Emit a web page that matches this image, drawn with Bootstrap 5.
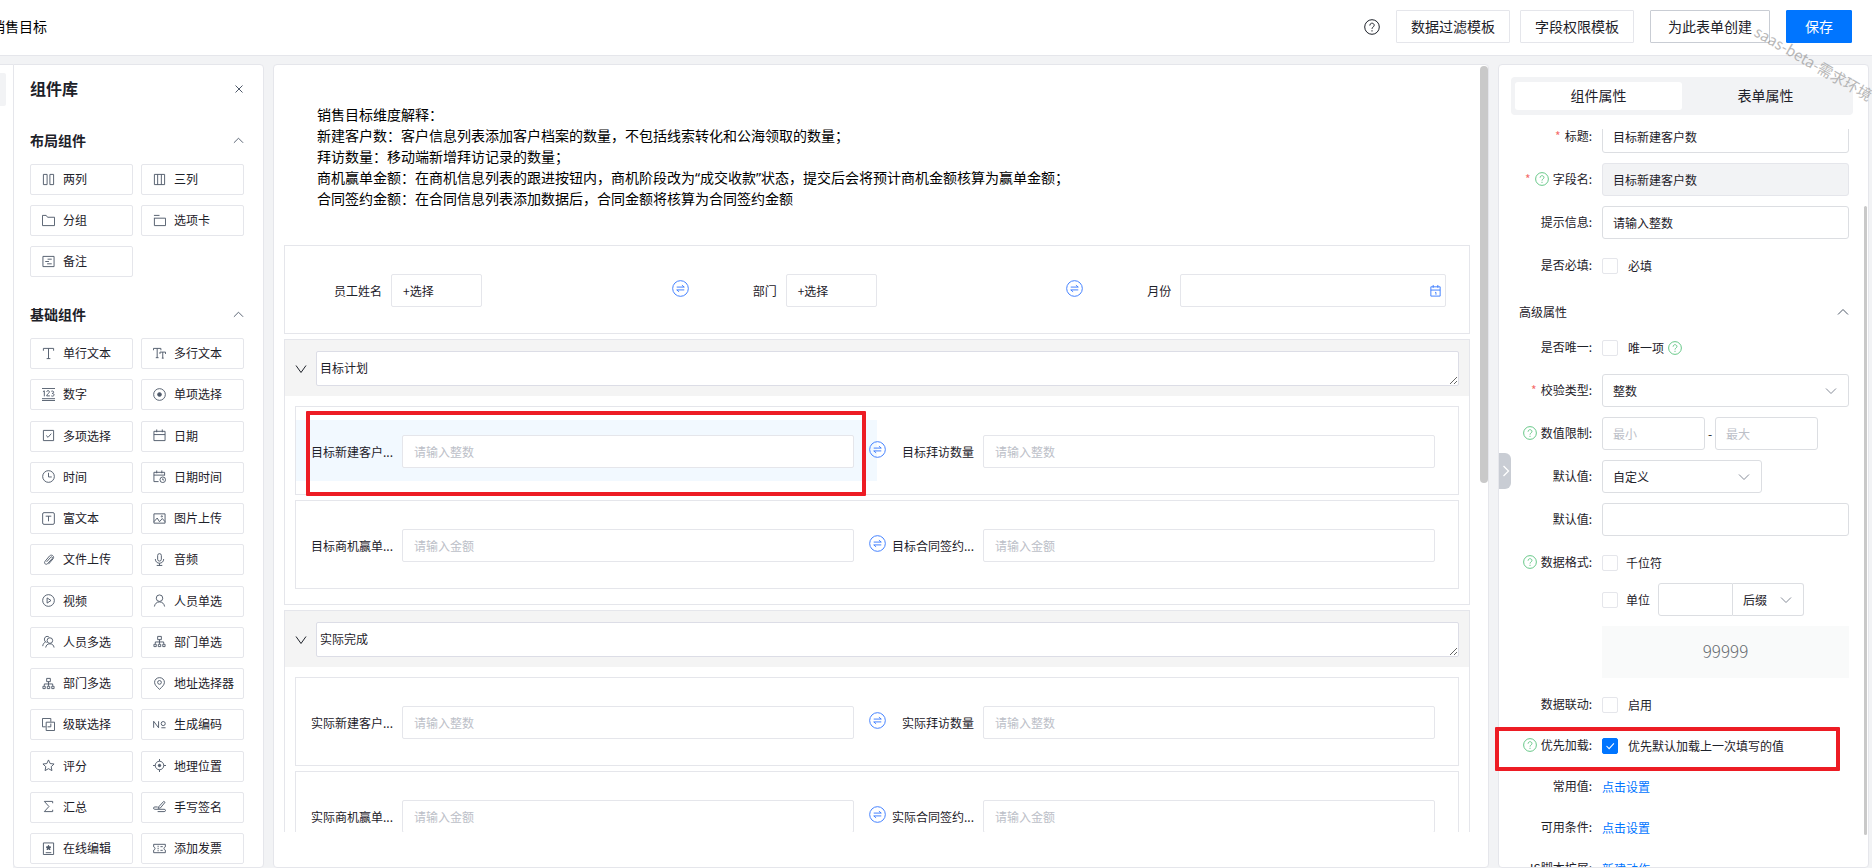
<!DOCTYPE html>
<html lang="zh-CN">
<head>
<meta charset="utf-8">
<meta name="viewport" content="width=device-width, initial-scale=1">
<title>销售目标</title>
<link rel="stylesheet" href="https://cdn.jsdelivr.net/npm/bootstrap@5.3.0/dist/css/bootstrap.min.css">
<style>
  :root { --line: #e5e6eb; --field-line: #dcdee2; --ink: #1d2129; --page: #f2f3f5; --brand: #0075ff; --alert: #ed1c24; }
  body { font: 12px/20px "Noto Sans CJK SC", "Liberation Sans", sans-serif; color: var(--ink); background: var(--page); }
  svg { display: block; fill: none; stroke: currentColor; }
  a { color: var(--brand); text-decoration: none; }

  .topbar { height: 56px; border-bottom: 1px solid var(--line); padding-right: 20px; padding-bottom: 2px; }
  .page-title { margin-left: -9px; font-size: 14px; font-weight: 400; color: #000; }
  .top-btn { height: 33px; padding: 0 14px; border: 1px solid var(--line); border-radius: 1px; font-size: 14px; line-height: 31px; color: var(--ink); background: #fff; }
  .top-btn.next { margin-left: 10px; }
  .top-btn.strong { border-color: #c9cdd4; padding: 0 17px; }
  .top-btn.save { background: var(--brand); border-color: var(--brand); color: #fff; padding: 0 18px; }
  .watermark { position: absolute; top: 20px; left: calc(100% - 116px); font-size: 15px; color: #8a8a8a; opacity: .6; white-space: nowrap; transform: rotate(30deg); transform-origin: 0 50%; z-index: 5; pointer-events: none; }

  .panel { background: #fff; border: 1px solid var(--line); border-radius: 4px; min-height: 0; }
  .main-area { min-height: 0; }
  .rail { width: 13px; background: #fff; border-top: 1px solid var(--line); padding-top: 8px; }
  .rail-item { display: block; width: 6px; height: 33px; background: var(--page); border-radius: 0 2px 2px 0; }

  .library { width: 251px; border-top-left-radius: 0; padding: 10px 19px 0 16px; overflow: hidden; }
  .library h1 { font-size: 16px; font-weight: 700; line-height: 27px; }
  .library h2 { font-size: 14px; font-weight: 700; line-height: 22px; }
  .block-head { padding: 3px 0 13px; }
  .tool-grid { display: grid; grid-template-columns: 1fr 1fr; column-gap: 8px; row-gap: 10px; align-content: space-between; margin-bottom: 23px; }
  .tool-grid.tall { min-height: 526px; margin-bottom: 0; }
  .tool { height: 31px; display: flex; align-items: center; gap: 8px; padding: 0 0 1px 11px; border: 1px solid var(--line); border-radius: 2px; background: #fff; color: var(--ink); white-space: nowrap; line-height: 20px; }
  .tool svg { width: 13px; height: 13px; color: #4e5969; flex: none; }
  .plain { border: 0; background: none; padding: 0; color: #4e5969; }
  .plain.dark { color: #1d2129; }

  .canvas { margin: 0 9px; padding: 1px 0 35px; overflow: hidden; }
  .canvas-view { overflow: hidden; padding: 38px 10px 0; }
  .intro { margin: 0 0 36px 33px; line-height: 21px; font-family: "Noto Sans", "Noto Sans CJK SC", sans-serif; font-size: 14px; color: #000; }
  .bar { width: 8px; background: #c9c9c9; border-radius: 4px; }
  .canvas .bar { height: 417px; margin-bottom: -35px; }
  .form-line { border: 1px solid var(--line); display: flex; padding: 13px 0; margin-bottom: 5px; background: #fff; }
  .cell { flex: 1 1 0; min-width: 0; display: flex; align-items: center; position: relative; height: 61px; padding: 2px 23px 0 14px; }
  .cell.active { background: #f2f9ff; }
  .cell > label, .cell > .cap { width: 83px; margin-right: 9px; text-align: right; white-space: nowrap; flex: none; }
  .swap { position: absolute; right: -9px; top: 21px; width: 17px; height: 17px; z-index: 2; border: 0; padding: 0; background: none; color: #3a7bff; }
  .ctl { height: 33px; border: 1px solid var(--line); border-radius: 2px; padding: 0 11px; background-color: #fff; color: var(--ink); font-size: 12px; line-height: 20px; width: 100%; min-width: 0; }
  .ctl::placeholder { color: #bcc0c8; opacity: 1; }
  button.ctl { width: 91px; text-align: left; }
  .date-icon { color: #3a7bff; }
  .group { border: 1px solid var(--line); margin-bottom: 5px; padding-bottom: 10px; }
  .group-head { background: #f4f4f4; padding: 11px 10px 10px 9px; display: flex; align-items: center; gap: 8px; margin-bottom: 10px; height: 56px; }
  .group-head textarea { flex: 1; height: 35px; border: 1px solid #dcdde6; border-radius: 2px; padding: 7px 3px; line-height: 18px; color: var(--ink); overflow: hidden; resize: both; min-width: 0; }
  .group .form-line { margin: 0 10px 5px; }
  .mark-red { position: absolute; border: 4px solid var(--alert); border-radius: 1px; pointer-events: none; z-index: 3; }
  .mark-field { left: 10px; right: 11px; top: -9px; height: 85px; }
  .mark-row { left: -16px; right: 9px; top: -2px; height: 44px; }

  .props { width: 371px; margin-right: 3px; position: relative; }
  .tabs { margin: 12px 15px 14px 12px; height: 38px; padding: 5px 4px; background: var(--page); border-radius: 4px; display: flex; }
  .tabs button { flex: 1; border: 0; border-radius: 3px; background: none; font-size: 14px; line-height: 26px; padding: 0 0 2px; color: var(--ink); }
  .tabs button.on { background: #fff; }
  .props-view { min-height: 0; overflow-x: visible; overflow-y: clip; padding-left: 12px; padding-right: 1px; }
  .props-form { margin: -9px 15px 0 0; }
  .prop { display: flex; align-items: center; min-height: 33px; margin-bottom: 10px; position: relative; }
  .prop.tight { margin-bottom: 8px; }
  .prop > .cap { width: 81px; margin-right: 10px; display: flex; align-items: center; justify-content: flex-end; gap: 4px; flex: none; white-space: nowrap; padding-bottom: 2px; }
  .need { color: #f56c6c; line-height: 16px; }
  .q { width: 14px; height: 14px; color: #52c078; }
  .prop .ctl { border-color: var(--field-line); border-radius: 3px; padding: 0 10px; }
  .prop .ctl:disabled { background: var(--page); border-color: var(--line); }
  .range { width: 216px; }
  .range .dash { flex: 0 0 10px; text-align: center; }
  .w-mode { flex: 0 0 160px; }
  .w-unit { flex: 0 0 75px; }
  .w-place { flex: 0 0 71px; }
  select.ctl { appearance: none; background: #fff url("data:image/svg+xml,%3Csvg xmlns='http://www.w3.org/2000/svg' viewBox='0 0 12 12' fill='none' stroke='%23868c98'%3E%3Cpath d='M1 3.5l5 5 5-5'/%3E%3C/svg%3E") no-repeat right 11px center / 12px 12px; }
  .form-check-input { width: 16px; height: 16px; margin: 0 10px 0 0; border: 1px solid var(--line); flex: none; }
  .form-check-input[type=checkbox] { border-radius: 2px; }
  .form-check-input:checked { background-color: var(--brand); border-color: var(--brand); background-image: url("data:image/svg+xml,%3Csvg xmlns='http://www.w3.org/2000/svg' viewBox='0 0 16 16' fill='none' stroke='white' stroke-width='1.2'%3E%3Cpath d='M4 8l3 3 5.500-6'/%3E%3C/svg%3E"); }
  .sub-head { height: 30px; margin: 0 0 9px 8px; padding-top: 10px; }
  .sub-head h3 { font-size: 12px; font-weight: 400; line-height: 24px; margin: 0; }
  .sample { margin-left: 91px; height: 52px; background: #f9fafa; font-size: 17px; font-weight: 300; line-height: 50px; text-align: center; color: #666a70; margin-bottom: 10px; }
  .props .bar { width: 3px; height: 629px; margin-top: 77px; flex: none; }
  .drawer-grip { position: absolute; left: 0; top: 388px; width: 12px; height: 36px; border: 0; padding: 0; background: #c9cdd4; color: #fff; border-radius: 0 6px 6px 0; }
</style>
</head>
<body class="vh-100 d-flex flex-column overflow-hidden position-relative">

<svg width="0" height="0" class="position-absolute" aria-hidden="true">
  <symbol id="i-two" viewBox="0 0 14 14"><path d="M1.500 1.500h4v11h-4zM8.500 1.500h4v11h-4z"/></symbol>
  <symbol id="i-three" viewBox="0 0 14 14"><path d="M1.500 1.500h11v11h-11zM5 1.500v11M9 1.500v11"/></symbol>
  <symbol id="i-folder" viewBox="0 0 14 14"><path d="M.5 12.500v-11h4l1.500 2h7.500v9z"/></symbol>
  <symbol id="i-tab" viewBox="0 0 14 14"><path d="M1 1.500h6M1 4.500h12.500v8H1.500v-8"/></symbol>
  <symbol id="i-note" viewBox="0 0 14 14"><path d="M1 1.500h12v11H1zM6 4.500h4.500M3.500 7h4M5.500 9.500h5"/></symbol>
  <symbol id="i-text" viewBox="0 0 14 14"><path d="M1.500 4V1.500h11V4M7 1.500v11M5 12.500h4"/></symbol>
  <symbol id="i-multi" viewBox="0 0 14 14"><path d="M.5 3.500v-2h8v2M4.500 1.500v10M3 11.500h3M7.500 7.500v-2h6v2M10.500 5.500v6.500M9.500 12h2"/></symbol>
  <symbol id="i-num" viewBox="0 0 14 14"><path d="M0 .5h14M0 11.500h14M0 13.500h14M1 4l1.500-1v6M5 4c0-1.500 3-1.500 3 0 0 1.500-3 3-3 4.500h3.500M10 3.500c3-1 3.500 2 1 2.300 3.500.5 2 4-1 2.700"/></symbol>
  <symbol id="i-radio" viewBox="0 0 14 14"><circle cx="7" cy="7" r="6.300"/><circle cx="7" cy="7" r="2" fill="currentColor"/></symbol>
  <symbol id="i-check" viewBox="0 0 14 14"><path d="M1.500 1.500h11v11h-11zM4.500 7l2 2 3.500-4"/></symbol>
  <symbol id="i-cal" viewBox="0 0 14 14"><path d="M1 2.500h12v10H1zM1 6h12M4 .5v3M10 .5v3"/></symbol>
  <symbol id="i-clock" viewBox="0 0 14 14"><circle cx="7" cy="7" r="6.300"/><path d="M7 3v4.500h3.500"/></symbol>
  <symbol id="i-caltime" viewBox="0 0 14 14"><path d="M6 12.500H1v-10h11.500V6M1 5.500h11.500M4 .5v3M9.500 .5v3"/><circle cx="10.500" cy="10.500" r="3"/><path d="M10.500 9v1.700h1.300"/></symbol>
  <symbol id="i-rich" viewBox="0 0 14 14"><rect x=".7" y=".7" width="12.600" height="12.600" rx="1.500"/><path d="M4 4.500h6M7 4.500V10"/></symbol>
  <symbol id="i-image" viewBox="0 0 14 14"><path d="M1 2h12v10H1zM1 10.500l3.500-4 2.500 4L10 7l3 3.500"/><circle cx="9.500" cy="4.700" r=".7"/></symbol>
  <symbol id="i-clip" viewBox="0 0 14 14"><path d="M5 9.500l4.500-5c1-1 2.500.3 1.600 1.400L6 11.500c-1.600 1.700-4.300-.3-2.800-2.400L8 3.300c2.300-2.500 6 .3 3.900 3L7 12"/></symbol>
  <symbol id="i-mic" viewBox="0 0 14 14"><rect x="5" y=".7" width="4" height="8" rx="2"/><path d="M2.500 6.500c0 6 9 6 9 0M7 11v2.500M4 13.400h6"/></symbol>
  <symbol id="i-play" viewBox="0 0 14 14"><circle cx="7" cy="7" r="6.300"/><path d="M5.500 4.200v5.600L9.700 7z"/></symbol>
  <symbol id="i-user" viewBox="0 0 14 14"><circle cx="7" cy="4.500" r="3.500"/><path d="M1.500 13.500c.5-3 2.500-5 5.500-5s5 2 5.500 5"/></symbol>
  <symbol id="i-users" viewBox="0 0 14 14"><circle cx="8.500" cy="6" r="3"/><path d="M4 13.500c.3-2.500 2-4 4.500-4s4.200 1.500 4.500 4M5 8C1.500 7 2 1.500 5.500 1.500c1 0 1.700.4 2.300 1M.8 12c.2-2 1-3.500 3-4.500"/></symbol>
  <symbol id="i-dept" viewBox="0 0 14 14"><path d="M5 1.500h4v3.500H5zM7 5v2.500M2.500 9.500v-2h9v2M7 7.500v2M1 10h2.500v2.500H1zM5.700 10h2.600v2.500H5.700zM10.500 10H13v2.500h-2.500z"/></symbol>
  <symbol id="i-pin" viewBox="0 0 14 14"><path d="M7 13.300C4 10.500 1.700 8.500 1.700 5.700a5.300 5 0 0 1 10.600 0C12.300 8.500 10 10.500 7 13.300z"/><circle cx="7" cy="5.800" r="2"/></symbol>
  <symbol id="i-cascade" viewBox="0 0 14 14"><path d="M4 9.500H.5v-9h9V4M4.500 4.500h9v9h-9zM9.500 6v3.500H6"/></symbol>
  <symbol id="i-no" viewBox="0 0 14 14"><path d="M.7 10.500v-7l5.300 7v-7M9 10.500h4.500"/><circle cx="11" cy="6" r="2.200"/></symbol>
  <symbol id="i-star" viewBox="0 0 14 14"><path d="M7 1l1.800 3.900 4.200.5-3.100 2.900.8 4.200L7 10.400l-3.700 2.100.8-4.200L1 5.400l4.200-.5z"/></symbol>
  <symbol id="i-target" viewBox="0 0 14 14"><circle cx="7" cy="7" r="4.600"/><circle cx="7" cy="7" r="1.300" fill="currentColor"/><path d="M7 0v2.400M7 11.600V14M0 7h2.400M11.600 7H14"/></symbol>
  <symbol id="i-sum" viewBox="0 0 14 14"><path d="M11.500 3.500v-2h-9l5 5.500-5 5.500h9v-2"/></symbol>
  <symbol id="i-sign" viewBox="0 0 14 14"><path d="M6 7.500L11.500 1.500l1.500 1L8 8.500l-2.500.5zM5 7.500H2c-2 0-2 2.500 0 2.500h10c2 0 2 2.500 0 2.500H5"/></symbol>
  <symbol id="i-online" viewBox="0 0 14 14"><path d="M1.500 1h11v12.500h-11zM4 11.500h6"/><path d="M7 3.500l.8 1.700 1.700.2-1.300 1.200.4 1.800L7 7.500l-1.600.9.400-1.800-1.300-1.200 1.700-.2z" fill="currentColor"/></symbol>
  <symbol id="i-ticket" viewBox="0 0 14 14"><path d="M.7 2.500h12.600v2.700c-2 .5-2 3.100 0 3.600v2.700H.7V8.800c2-.5 2-3.100 0-3.600zM5.500 4v1.500M5.500 6.300v1.500M5.500 8.700v1.300M8 5h2.500M8 9h2.500"/></symbol>
  <symbol id="i-q" viewBox="0 0 16 16"><circle cx="8" cy="8" r="7.300"/><path d="M5.800 6.500c0-3 4.400-3 4.400-.2 0 1.700-2.200 1.700-2.200 3.500M8 11.200v1.300"/></symbol>
  <symbol id="i-swap" viewBox="0 0 18 18"><circle cx="9" cy="9" r="8.300"/><path d="M5 7.500h8M10.500 5.500l2.500 2M13 10.500H5M7.500 12.500L5 10.500"/></symbol>
  <symbol id="i-up" viewBox="0 0 12 12"><path d="M1 8.500l5-5 5 5"/></symbol>
  <symbol id="i-down" viewBox="0 0 12 12"><path d="M1 2.500l5 7 5-7"/></symbol>
  <symbol id="i-x" viewBox="0 0 10 10"><path d="M1.500 1.500l7 7M8.500 1.500l-7 7"/></symbol>
  <symbol id="i-right" viewBox="0 0 10 14"><path d="M3.500 2l5 5-5 5" stroke-width="1.300"/></symbol>
  <symbol id="i-date" viewBox="0 0 12 14"><path d="M1 2.500h10v10H1zM1 6h10M3.500 .5v3M8.500 .5v3M5.500 8.500h1v2.500"/></symbol>
</svg>

<header class="topbar bg-white d-flex align-items-center flex-shrink-0">
  <h1 class="page-title mb-0 me-auto">销售目标</h1>
  <button class="plain dark me-3" type="button" aria-label="帮助"><svg width="16" height="16"><use href="#i-q"/></svg></button>
  <button class="top-btn" type="button">数据过滤模板</button>
  <button class="top-btn next" type="button">字段权限模板</button>
  <button class="top-btn strong mx-3" type="button">为此表单创建</button>
  <button class="top-btn save" type="button">保存</button>
</header>
<div class="watermark" aria-hidden="true">saas-beta-需求环境</div>

<main class="main-area d-flex flex-grow-1 pt-2">
  <nav class="rail flex-shrink-0" aria-label="导航"><span class="rail-item"></span></nav>

  <aside class="panel library flex-shrink-0">
    <div class="d-flex justify-content-between align-items-center mb-4">
      <h1 class="mb-0">组件库</h1>
      <button class="plain" type="button" aria-label="关闭"><svg width="10" height="10"><use href="#i-x"/></svg></button>
    </div>
    <div class="block-head d-flex justify-content-between align-items-center">
      <h2 class="mb-0">布局组件</h2>
      <button class="plain" type="button" aria-label="收起"><svg width="11" height="11"><use href="#i-up"/></svg></button>
    </div>
    <div class="tool-grid">
      <button class="tool" type="button"><svg><use href="#i-two"/></svg>两列</button>
      <button class="tool" type="button"><svg><use href="#i-three"/></svg>三列</button>
      <button class="tool" type="button"><svg><use href="#i-folder"/></svg>分组</button>
      <button class="tool" type="button"><svg><use href="#i-tab"/></svg>选项卡</button>
      <button class="tool" type="button"><svg><use href="#i-note"/></svg>备注</button>
    </div>
    <div class="block-head d-flex justify-content-between align-items-center">
      <h2 class="mb-0">基础组件</h2>
      <button class="plain" type="button" aria-label="收起"><svg width="11" height="11"><use href="#i-up"/></svg></button>
    </div>
    <div class="tool-grid tall">
      <button class="tool" type="button"><svg><use href="#i-text"/></svg>单行文本</button>
      <button class="tool" type="button"><svg><use href="#i-multi"/></svg>多行文本</button>
      <button class="tool" type="button"><svg><use href="#i-num"/></svg>数字</button>
      <button class="tool" type="button"><svg><use href="#i-radio"/></svg>单项选择</button>
      <button class="tool" type="button"><svg><use href="#i-check"/></svg>多项选择</button>
      <button class="tool" type="button"><svg><use href="#i-cal"/></svg>日期</button>
      <button class="tool" type="button"><svg><use href="#i-clock"/></svg>时间</button>
      <button class="tool" type="button"><svg><use href="#i-caltime"/></svg>日期时间</button>
      <button class="tool" type="button"><svg><use href="#i-rich"/></svg>富文本</button>
      <button class="tool" type="button"><svg><use href="#i-image"/></svg>图片上传</button>
      <button class="tool" type="button"><svg><use href="#i-clip"/></svg>文件上传</button>
      <button class="tool" type="button"><svg><use href="#i-mic"/></svg>音频</button>
      <button class="tool" type="button"><svg><use href="#i-play"/></svg>视频</button>
      <button class="tool" type="button"><svg><use href="#i-user"/></svg>人员单选</button>
      <button class="tool" type="button"><svg><use href="#i-users"/></svg>人员多选</button>
      <button class="tool" type="button"><svg><use href="#i-dept"/></svg>部门单选</button>
      <button class="tool" type="button"><svg><use href="#i-dept"/></svg>部门多选</button>
      <button class="tool" type="button"><svg><use href="#i-pin"/></svg>地址选择器</button>
      <button class="tool" type="button"><svg><use href="#i-cascade"/></svg>级联选择</button>
      <button class="tool" type="button"><svg><use href="#i-no"/></svg>生成编码</button>
      <button class="tool" type="button"><svg><use href="#i-star"/></svg>评分</button>
      <button class="tool" type="button"><svg><use href="#i-target"/></svg>地理位置</button>
      <button class="tool" type="button"><svg><use href="#i-sum"/></svg>汇总</button>
      <button class="tool" type="button"><svg><use href="#i-sign"/></svg>手写签名</button>
      <button class="tool" type="button"><svg><use href="#i-online"/></svg>在线编辑</button>
      <button class="tool" type="button"><svg><use href="#i-ticket"/></svg>添加发票</button>
    </div>
  </aside>

  <section class="panel canvas flex-grow-1 d-flex">
    <div class="canvas-view flex-grow-1">
      <p class="intro">销售目标维度解释：<br>新建客户数：客户信息列表添加客户档案的数量，不包括线索转化和公海领取的数量；<br>拜访数量：移动端新增拜访记录的数量；<br>商机赢单金额：在商机信息列表的跟进按钮内，商机阶段改为“成交收款”状态，提交后会将预计商机金额核算为赢单金额；<br>合同签约金额：在合同信息列表添加数据后，合同金额将核算为合同签约金额</p>

      <div class="form-line">
        <div class="cell"><span class="cap">员工姓名</span><button class="ctl" type="button">+选择</button>
          <button class="swap" type="button" aria-label="交换"><svg width="17" height="17"><use href="#i-swap"/></svg></button></div>
        <div class="cell"><span class="cap">部门</span><button class="ctl" type="button">+选择</button>
          <button class="swap" type="button" aria-label="交换"><svg width="17" height="17"><use href="#i-swap"/></svg></button></div>
        <div class="cell"><label for="month">月份</label><div class="position-relative flex-grow-1"><input id="month" class="ctl d-block" type="text">
          <svg class="date-icon position-absolute top-50 end-0 translate-middle-y me-1" width="13" height="13"><use href="#i-date"/></svg></div></div>
      </div>

      <section class="group">
        <div class="group-head">
          <button class="plain dark" type="button" aria-label="收起"><svg width="14" height="12"><use href="#i-down"/></svg></button>
          <textarea rows="1" aria-label="分组标题">目标计划</textarea>
        </div>
        <div class="form-line">
          <div class="cell active"><label for="f1">目标新建客户...</label><input id="f1" class="ctl" type="text" placeholder="请输入整数">
            <span class="mark-red mark-field"></span>
            <button class="swap" type="button" aria-label="交换"><svg width="17" height="17"><use href="#i-swap"/></svg></button></div>
          <div class="cell"><label for="f2">目标拜访数量</label><input id="f2" class="ctl" type="text" placeholder="请输入整数"></div>
        </div>
        <div class="form-line">
          <div class="cell"><label for="f3">目标商机赢单...</label><input id="f3" class="ctl" type="text" placeholder="请输入金额">
            <button class="swap" type="button" aria-label="交换"><svg width="17" height="17"><use href="#i-swap"/></svg></button></div>
          <div class="cell"><label for="f4">目标合同签约...</label><input id="f4" class="ctl" type="text" placeholder="请输入金额"></div>
        </div>
      </section>

      <section class="group">
        <div class="group-head">
          <button class="plain dark" type="button" aria-label="收起"><svg width="14" height="12"><use href="#i-down"/></svg></button>
          <textarea rows="1" aria-label="分组标题">实际完成</textarea>
        </div>
        <div class="form-line">
          <div class="cell"><label for="f5">实际新建客户...</label><input id="f5" class="ctl" type="text" placeholder="请输入整数">
            <button class="swap" type="button" aria-label="交换"><svg width="17" height="17"><use href="#i-swap"/></svg></button></div>
          <div class="cell"><label for="f6">实际拜访数量</label><input id="f6" class="ctl" type="text" placeholder="请输入整数"></div>
        </div>
        <div class="form-line">
          <div class="cell"><label for="f7">实际商机赢单...</label><input id="f7" class="ctl" type="text" placeholder="请输入金额">
            <button class="swap" type="button" aria-label="交换"><svg width="17" height="17"><use href="#i-swap"/></svg></button></div>
          <div class="cell"><label for="f8">实际合同签约...</label><input id="f8" class="ctl" type="text" placeholder="请输入金额"></div>
        </div>
      </section>
    </div>
    <div class="bar flex-shrink-0"></div>
  </section>

  <aside class="panel props flex-shrink-0 d-flex flex-column">
    <div class="tabs flex-shrink-0">
      <button class="on" type="button">组件属性</button>
      <button type="button">表单属性</button>
    </div>
    <div class="props-view d-flex flex-grow-1">
      <form class="props-form flex-grow-1">
        <div class="prop"><label class="cap" for="p1"><span class="need">*</span>标题:</label><input id="p1" class="ctl" type="text" value="目标新建客户数"></div>
        <div class="prop"><label class="cap" for="p2"><span class="need">*</span><svg class="q"><use href="#i-q"/></svg>字段名:</label><input id="p2" class="ctl" type="text" value="目标新建客户数" disabled></div>
        <div class="prop"><label class="cap" for="p3">提示信息:</label><input id="p3" class="ctl" type="text" value="请输入整数"></div>
        <div class="prop"><span class="cap">是否必填:</span><input id="p4" class="form-check-input" type="checkbox"><label for="p4">必填</label></div>
        <div class="sub-head d-flex justify-content-between align-items-center"><h3>高级属性</h3>
          <button class="plain" type="button" aria-label="收起"><svg width="12" height="12"><use href="#i-up"/></svg></button></div>
        <div class="prop"><span class="cap">是否唯一:</span><input id="p5" class="form-check-input" type="checkbox"><label for="p5">唯一项</label><svg class="q ms-1"><use href="#i-q"/></svg></div>
        <div class="prop"><label class="cap" for="p6"><span class="need">*</span>校验类型:</label><select id="p6" class="ctl"><option>整数</option></select></div>
        <div class="prop"><label class="cap" for="p7"><svg class="q"><use href="#i-q"/></svg>数值限制:</label>
          <div class="range d-flex align-items-center"><input id="p7" class="ctl" type="text" placeholder="最小"><span class="dash">-</span><input class="ctl" type="text" placeholder="最大" aria-label="最大"></div></div>
        <div class="prop"><label class="cap" for="p8">默认值:</label><select id="p8" class="ctl w-mode"><option>自定义</option></select></div>
        <div class="prop"><label class="cap" for="p9">默认值:</label><input id="p9" class="ctl" type="text"></div>
        <div class="prop mb-1"><span class="cap"><svg class="q"><use href="#i-q"/></svg>数据格式:</span><input id="p10" class="form-check-input me-2" type="checkbox"><label for="p10">千位符</label></div>
        <div class="prop"><span class="cap"></span><input id="p11" class="form-check-input me-2" type="checkbox"><label for="p11" class="me-2 flex-shrink-0">单位</label>
          <input class="ctl w-unit rounded-end-0" type="text" aria-label="单位"><select class="ctl w-place border-start-0 rounded-start-0" aria-label="单位位置"><option>后缀</option></select></div>
        <div class="sample">99999</div>
        <div class="prop tight"><span class="cap">数据联动:</span><input id="p12" class="form-check-input" type="checkbox"><label for="p12">启用</label></div>
        <div class="prop tight"><span class="cap"><svg class="q"><use href="#i-q"/></svg>优先加载:</span><input id="p13" class="form-check-input" type="checkbox" checked><label for="p13">优先默认加载上一次填写的值</label><span class="mark-red mark-row"></span></div>
        <div class="prop tight"><span class="cap">常用值:</span><a href="#">点击设置</a></div>
        <div class="prop tight"><span class="cap">可用条件:</span><a href="#">点击设置</a></div>
        <div class="prop tight"><span class="cap">JS脚本扩展:</span><a href="#">新建动作</a></div>
      </form>
      <div class="bar"></div>
    </div>
    <button class="drawer-grip" type="button" aria-label="收起属性"><svg width="12" height="14"><use href="#i-right"/></svg></button>
  </aside>
</main>

<script src="https://cdn.jsdelivr.net/npm/bootstrap@5.3.0/dist/js/bootstrap.bundle.min.js"></script>
</body>
</html>
